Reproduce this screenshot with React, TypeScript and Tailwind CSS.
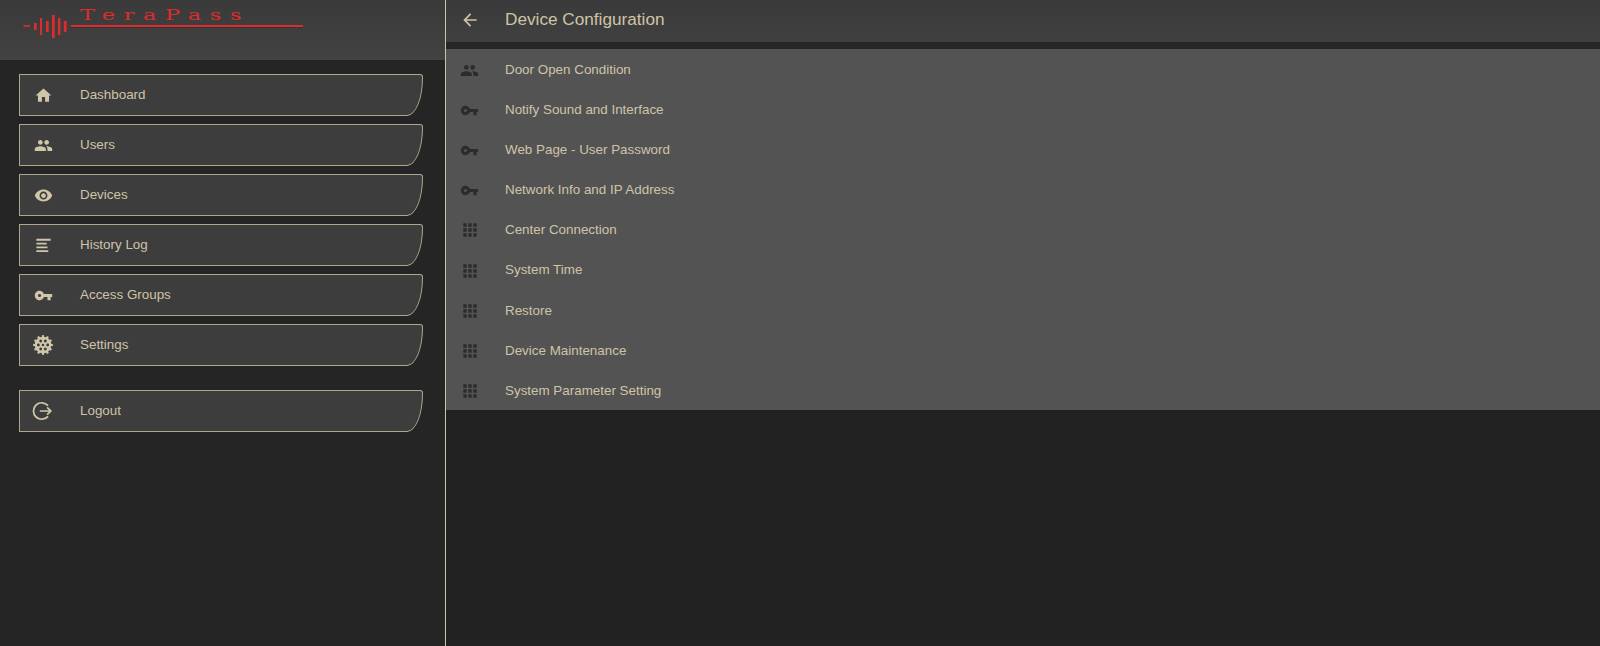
const P: Record<string, string> = {
  home: "M10 20v-6h4v6h5v-8h3L12 3 2 12h3v8z",
  people: "M16 11c1.66 0 2.99-1.34 2.99-3S17.66 5 16 5c-1.66 0-3 1.34-3 3s1.34 3 3 3zm-8 0c1.66 0 2.99-1.34 2.99-3S9.66 5 8 5C6.34 5 5 6.34 5 8s1.34 3 3 3zm0 2c-2.33 0-7 1.17-7 3.5V19h14v-2.5c0-2.33-4.67-3.5-7-3.5zm8 0c-.29 0-.62.02-.97.05 1.16.84 1.97 1.97 1.97 3.45V19h6v-2.5c0-2.33-4.67-3.5-7-3.5z",
  eye: "M12 4.5C7 4.5 2.73 7.61 1 12c1.73 4.39 6 7.5 11 7.5s9.27-3.11 11-7.5c-1.73-4.39-6-7.5-11-7.5zM12 17c-2.76 0-5-2.24-5-5s2.24-5 5-5 5 2.24 5 5-2.24 5-5 5zm0-8c-1.66 0-3 1.34-3 3s1.34 3 3 3 3-1.34 3-3-1.34-3-3-3z",
  log: "M3 3.6h18v2.4H3zM3 8.6h13v2H3zM3 13.4h14v2H3zM3 18h15v2.2H3z",
  key: "M12.65 10C11.83 7.67 9.61 6 7 6c-3.31 0-6 2.69-6 6s2.69 6 6 6c2.61 0 4.83-1.67 5.65-4H17v4h4v-4h2v-4H12.65zM7 14c-1.1 0-2-.9-2-2s.9-2 2-2 2 .9 2 2-.9 2-2 2z",
  grid: "M4 8h4V4H4v4zm6 12h4v-4h-4v4zm-6 0h4v-4H4v4zm0-6h4v-4H4v4zm6 0h4v-4h-4v4zm6-10v4h4V4h-4zm-6 4h4V4h-4v4zm6 6h4v-4h-4v4zm0 6h4v-4h-4v4z",
  back: "M20 11H7.83l5.59-5.59L12 4l-8 8 8 8 1.41-1.41L7.83 13H20v-2z",
};

function Icon({ d, className }: { d: string; className: string }) {
  return (
    <svg viewBox="0 0 24 24" className={className} fill="currentColor">
      <path d={d} />
    </svg>
  );
}

function Gear() {
  const teeth = [0, 30, 60, 90, 120, 150, 180, 210, 240, 270, 300, 330];
  const holes = [30, 90, 150, 210, 270, 330];
  return (
    <svg viewBox="0 0 24 24" className="h-[20px] w-[20px]">
      <circle cx="12" cy="12" r="10" fill="currentColor" />
      {teeth.map((a) => (
        <rect key={a} x="10.7" y="0.2" width="2.6" height="3" fill="currentColor" transform={`rotate(${a} 12 12)`} />
      ))}
      {holes.map((a) => (
        <circle key={a} cx="12" cy="6.4" r="1.7" fill="#3d3d3d" transform={`rotate(${a} 12 12)`} />
      ))}
      <circle cx="12" cy="12" r="1.5" fill="#3d3d3d" />
    </svg>
  );
}

function Logout() {
  return (
    <svg viewBox="0 0 24 24" className="h-[22px] w-[22px]" fill="none" stroke="currentColor" strokeWidth="1.9">
      <path d="M17.5 6.2A9 9 0 1 0 17.5 17.8" />
      <path d="M8.5 12h12M16.5 8l4 4-4 4" />
    </svg>
  );
}

function Logo() {
  const bars: [number, number, number, number][] = [
    [23.5, 25.2, 6.5, 1.6],
    [34, 23, 2.7, 7],
    [40, 18, 2, 17],
    [46, 21, 2.7, 11],
    [52, 15, 2.7, 23],
    [58, 18, 2.4, 17],
    [63.8, 21, 2.8, 11],
  ];
  return (
    <div className="relative h-[40px] w-[310px]">
      <svg viewBox="0 0 310 40" className="absolute left-0 top-0 h-[40px] w-[310px]">
        {bars.map(([x, y, w, h], i) => (
          <rect key={i} x={x} y={y} width={w} height={h} fill="#de2c2c" />
        ))}
        <rect x="71" y="25" width="232" height="2" fill="#de2c2c" />
        <line x1="71" y1="27.5" x2="303" y2="27.5" stroke="#2a2a2a" strokeWidth="1" strokeDasharray="1 1" />
      </svg>
      <span className="absolute left-[80px] top-[5px] origin-left scale-x-[1.6] whitespace-nowrap font-['DejaVu_Serif',serif] text-[14px] leading-[20px] tracking-[5.4px] text-[#de2c2c]">
        TeraPass
      </span>
    </div>
  );
}

function NavButton({ label, icon }: { label: string; icon: React.ReactNode }) {
  return (
    <div className="flex h-[42px] w-[404px] items-center rounded-tr-[3px] rounded-br-[16px_38px] border border-[#b0a68c] bg-[#3d3d3d] text-[13.4px] text-[#cfc4a8]">
      <div className="mr-[14px] flex w-[46px] justify-center text-[#d0c6aa]">{icon}</div>
      <span className="pt-[1px]">{label}</span>
    </div>
  );
}

const rows: [string, string][] = [
  ["people", "Door Open Condition"],
  ["key", "Notify Sound and Interface"],
  ["key", "Web Page - User Password"],
  ["key", "Network Info and IP Address"],
  ["grid", "Center Connection"],
  ["grid", "System Time"],
  ["grid", "Restore"],
  ["grid", "Device Maintenance"],
  ["grid", "System Parameter Setting"],
];

const cls = "h-[19px] w-[19px]";

export default function App() {
  return (
    <div className="flex h-[646px] w-[1600px] overflow-hidden bg-[#212121] font-['Liberation_Sans',Arial,sans-serif]">
      <aside className="flex w-[446px] shrink-0 flex-col border-r border-[#cfc4a8] bg-[#252525]">
        <div className="h-[60px] bg-gradient-to-b from-[#3a3a3a] to-[#424242]">
          <Logo />
        </div>
        <nav className="flex flex-col gap-[8px] pl-[19px] pt-[14px]">
          <NavButton label="Dashboard" icon={<Icon d={P.home} className={cls} />} />
          <NavButton label="Users" icon={<Icon d={P.people} className={cls} />} />
          <NavButton label="Devices" icon={<Icon d={P.eye} className={cls} />} />
          <NavButton label="History Log" icon={<Icon d={P.log} className={cls} />} />
          <NavButton label="Access Groups" icon={<Icon d={P.key} className={cls} />} />
          <NavButton label="Settings" icon={<Gear />} />
          <div className="h-[8px]" />
          <NavButton label="Logout" icon={<Logout />} />
        </nav>
      </aside>
      <main className="flex min-w-0 flex-1 flex-col">
        <header className="flex h-[42px] items-center bg-gradient-to-b from-[#3a3a3a] to-[#404040] pb-[2px] text-[#cfc4a8]">
          <div className="mr-[12px] flex w-[47px] justify-center">
            <Icon d={P.back} className="h-[20px] w-[20px]" />
          </div>
          <h1 className="text-[17.2px] font-normal">Device Configuration</h1>
        </header>
        <div className="h-[7px] bg-[#262626]" />
        <ul className="bg-[#535353]">
          {rows.map(([icon, label]) => (
            <li key={label} className="flex h-[40.1px] items-center pt-[2px] text-[13.4px] text-[#cfc4a8]">
              <div className="mr-[12px] flex w-[47px] justify-center text-[#2c2c2c]">
                <Icon d={P[icon]} className={icon === "grid" ? "h-[20px] w-[20px]" : cls} />
              </div>
              <span>{label}</span>
            </li>
          ))}
        </ul>
      </main>
    </div>
  );
}
